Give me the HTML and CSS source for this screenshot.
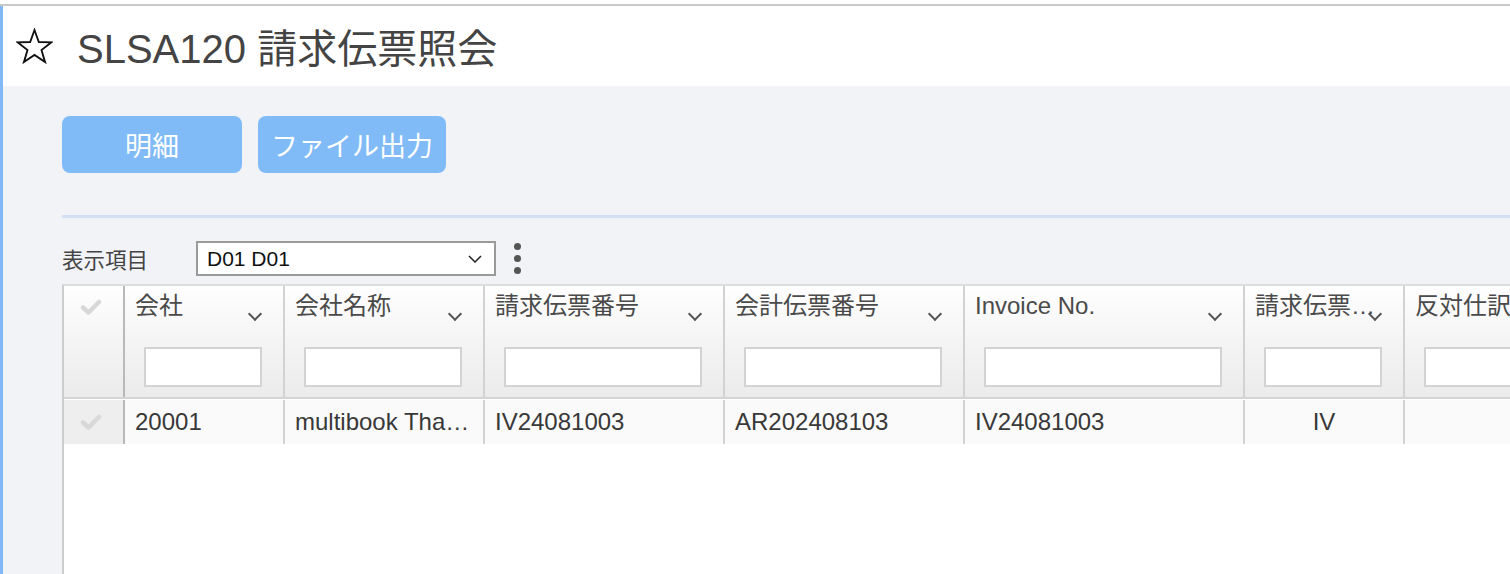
FILE: index.html
```html
<!DOCTYPE html>
<html lang="ja">
<head>
    <meta charset="UTF-8">
    <meta name="viewport" content="width=device-width, initial-scale=1.0">
    <title>SLSA120 請求伝票照会</title>
    <link rel="stylesheet" href="styles.css">
</head>
<body>
    <div class="app-bar"></div>
    <div class="page">
        <header class="title-bar">
            <svg class="star" viewBox="0 0 36 36" width="37" height="37">
                <polygon points="18,2 22.2,13.6 34.5,13.9 24.8,21.4 28.3,33.2 18,26.2 7.7,33.2 11.2,21.4 1.5,13.9 13.8,13.6"
                         fill="none" stroke="#111" stroke-width="1.8" stroke-linejoin="miter"/>
            </svg>
            <h1>SLSA120 請求伝票照会</h1>
        </header>

        <main class="content">
            <div class="actions">
                <button class="btn btn-detail">明細</button>
                <button class="btn">ファイル出力</button>
            </div>

            <div class="divider"></div>

            <div class="view-bar">
                <span class="view-label">表示項目</span>
                <div class="select">
                    <span>D01 D01</span>
                    <svg viewBox="0 0 14 8" width="14" height="8">
                        <polyline points="1,1 7,7 13,1" fill="none" stroke="#222" stroke-width="1.5"/>
                    </svg>
                </div>
                <span class="kebab"><i></i><i></i><i></i></span>
            </div>

            <div class="grid">
                <div class="grid-head">
                    <div class="cell c-check">
                        <svg class="tick" viewBox="0 0 22 16" width="22" height="16">
                            <polyline points="3,8.5 8.5,13.5 19,3" fill="none" stroke="#d8d8d8" stroke-width="4.5" stroke-linecap="round" stroke-linejoin="round"/>
                        </svg>
                    </div>
                    <div class="cell c-s">
                        <div class="head-label">会社</div>
                        <span class="sort"></span>
                        <div class="head-filter"><input type="text"></div>
                    </div>
                    <div class="cell c-m">
                        <div class="head-label">会社名称</div>
                        <span class="sort"></span>
                        <div class="head-filter"><input type="text"></div>
                    </div>
                    <div class="cell c-l">
                        <div class="head-label">請求伝票番号</div>
                        <span class="sort"></span>
                        <div class="head-filter"><input type="text"></div>
                    </div>
                    <div class="cell c-l">
                        <div class="head-label">会計伝票番号</div>
                        <span class="sort"></span>
                        <div class="head-filter"><input type="text"></div>
                    </div>
                    <div class="cell c-xl">
                        <div class="head-label">Invoice No.</div>
                        <span class="sort"></span>
                        <div class="head-filter"><input type="text"></div>
                    </div>
                    <div class="cell c-s">
                        <div class="head-label">請求伝票種別</div>
                        <span class="sort"></span>
                        <div class="head-filter"><input type="text"></div>
                    </div>
                    <div class="cell c-m">
                        <div class="head-label">反対仕訳</div>
                        <span class="sort"></span>
                        <div class="head-filter"><input type="text"></div>
                    </div>
                </div>

                <div class="grid-row">
                    <div class="cell c-check">
                        <svg class="tick" viewBox="0 0 22 16" width="22" height="16">
                            <polyline points="3,8.5 8.5,13.5 19,3" fill="none" stroke="#d8d8d8" stroke-width="4.5" stroke-linecap="round" stroke-linejoin="round"/>
                        </svg>
                    </div>
                    <div class="cell c-s">20001</div>
                    <div class="cell c-m"><span class="clip">multibook Thailand</span></div>
                    <div class="cell c-l">IV24081003</div>
                    <div class="cell c-l">AR202408103</div>
                    <div class="cell c-xl">IV24081003</div>
                    <div class="cell c-s center">IV</div>
                    <div class="cell c-m"></div>
                </div>
            </div>
        </main>
    </div>
</body>
</html>
```

FILE: styles.css
```css
body {
    margin: 0;
    padding-top: 4px;
    font-family: "Liberation Sans", "Noto Sans CJK JP", sans-serif;
    color: #444;
    background: #fff;
    height: 100vh;
    box-sizing: border-box;
    overflow: hidden;
}
.app-bar {
    height: 2px;
    background-color: #c9c9c9;
}
.page {
    border-left: 3px solid #80b9f6;
    height: 100%;
    display: flex;
    flex-direction: column;
}

/* title */
.title-bar {
    height: 80px;
    display: flex;
    align-items: center;
    gap: 24px;
    padding-left: 13px;
    background: #fff;
    flex-shrink: 0;
}
.title-bar h1 {
    margin: 0;
    font-size: 40px;
    font-weight: normal;
    color: #444;
}

/* content */
.content {
    flex: 1;
    background-color: #f2f3f7;
    padding: 30px 0 0 59px;
    overflow: hidden;
}
.actions {
    display: flex;
    gap: 16px;
}
.btn {
    height: 57px;
    padding: 0 13px;
    border: none;
    border-radius: 8px;
    background-color: #80bbf7;
    color: #fff;
    font-family: inherit;
    font-size: 27px;
    cursor: pointer;
}
.btn-detail {
    width: 180px;
}
.divider {
    margin-top: 42px;
    height: 3px;
    background-color: #d3e0f3;
}

.view-bar {
    margin-top: 23px;
    height: 35px;
    display: flex;
    align-items: center;
}
.view-label {
    width: 134px;
    font-size: 21.5px;
    color: #444;
}
.select {
    width: 300px;
    height: 35px;
    box-sizing: border-box;
    border: 2px solid #9a9a9a;
    background: #fff;
    display: flex;
    align-items: center;
    justify-content: space-between;
    padding: 0 12px 0 9px;
    font-size: 21px;
    color: #111;
}
.kebab {
    margin-left: 18px;
    display: flex;
    flex-direction: column;
    gap: 5px;
}
.kebab i {
    width: 7px;
    height: 7px;
    border-radius: 50%;
    background-color: #555;
}

/* grid */
.grid {
    margin-top: 8px;
    width: 1600px;
    height: 400px;
    background: #fff;
    border-left: 2px solid #cdcdcd;
    border-top: 2px solid #dcdcdc;
}
.grid-head,
.grid-row {
    display: flex;
}
.grid-head {
    height: 111px;
    border-bottom: 2px solid #d4d4d4;
}
.grid-row {
    margin-top: 1px;
    height: 44px;
}
.cell {
    position: relative;
    box-sizing: border-box;
    border-right: 2px solid #d2d2d2;
    flex-shrink: 0;
    min-width: 0;
    overflow: hidden;
}
.grid-head .cell {
    background: linear-gradient(#fefefe, #ebebeb);
}
.c-check { width: 61px; border-right-color: #b9b9b9; }
.c-s { width: 160px; }
.c-m { width: 200px; }
.c-l { width: 240px; }
.c-xl { width: 280px; }

.grid-head .c-check .tick {
    margin: 13px 0 0 16px;
}
.head-label {
    padding: 6px 20px 0 10px;
    line-height: 28px;
    font-size: 24px;
    color: #4a4a4a;
    white-space: nowrap;
    overflow: hidden;
    text-overflow: ellipsis;
}
.sort {
    position: absolute;
    top: 23px;
    right: 23px;
    width: 8px;
    height: 8px;
    border-right: 2.5px solid #555;
    border-bottom: 2.5px solid #555;
    transform: rotate(45deg);
}
.head-filter {
    padding: 27px 21px 0 19px;
}
.head-filter input {
    display: block;
    width: 100%;
    height: 40px;
    box-sizing: border-box;
    border: 2px solid #d3d3d3;
    background: #fff;
    margin: 0;
}

.grid-row .cell {
    background: #fafafa;
    display: flex;
    align-items: center;
    padding-left: 10px;
    font-size: 24px;
    color: #383838;
    white-space: nowrap;
}
.grid-row .c-check {
    background: #eeeeee;
    padding-left: 16px;
}
.grid-row .center {
    justify-content: center;
    padding-left: 0;
}
.clip {
    min-width: 0;
    overflow: hidden;
    text-overflow: ellipsis;
    padding-right: 12px;
}
```
